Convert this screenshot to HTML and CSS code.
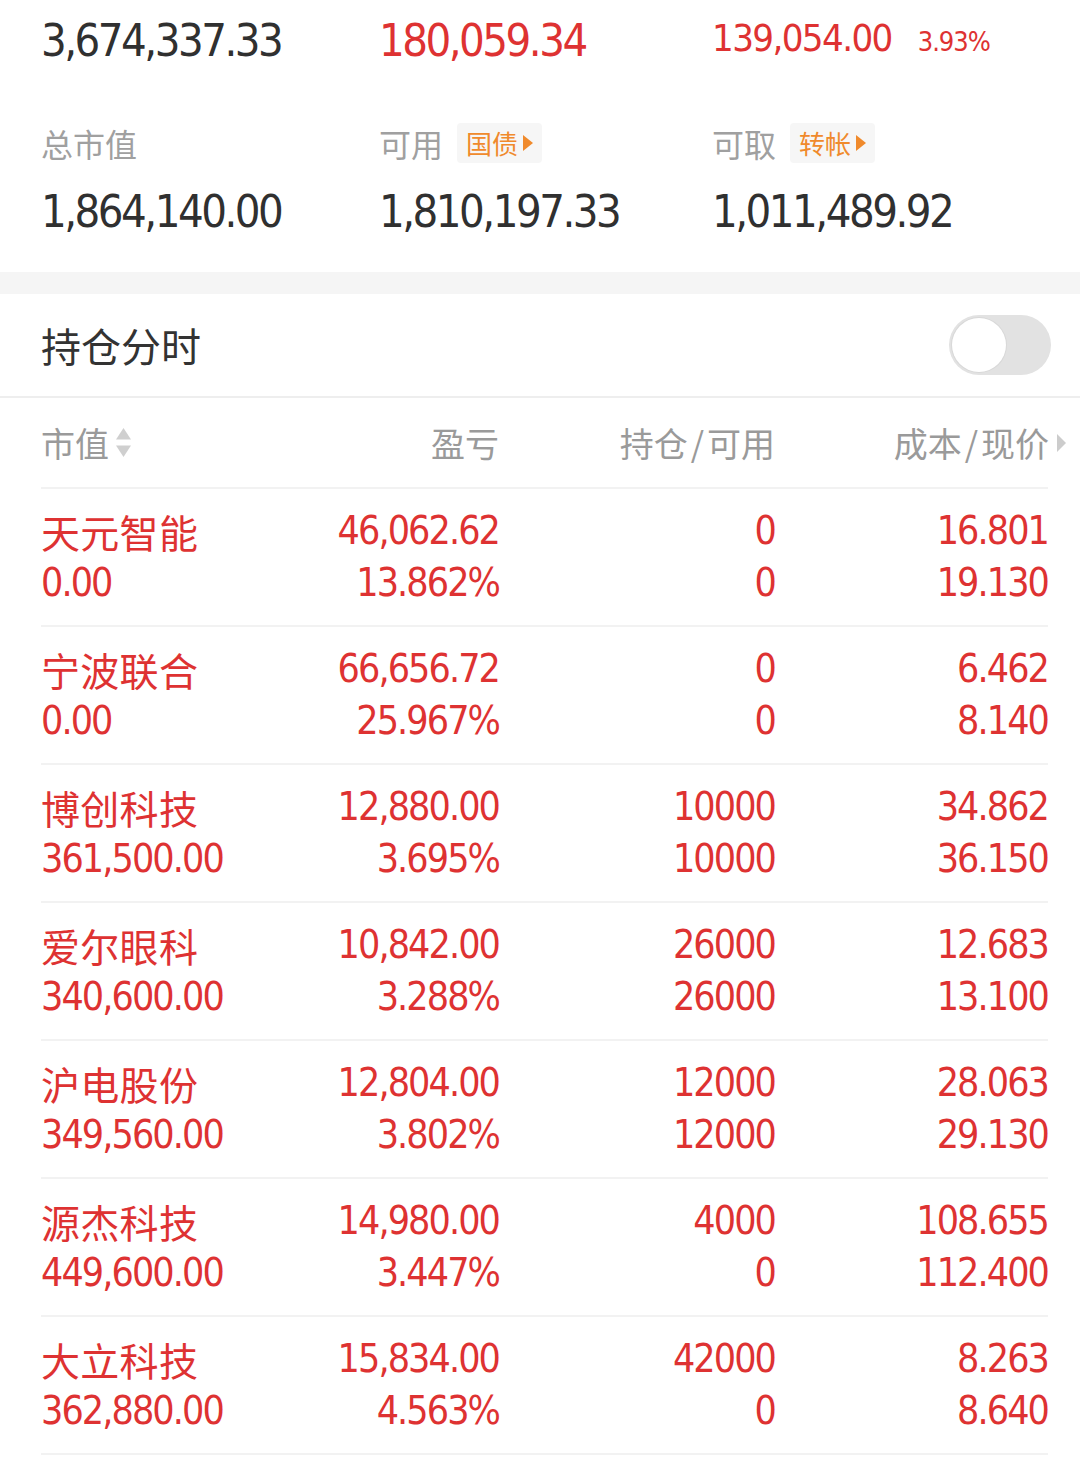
FILE: index.html
```html
<!DOCTYPE html>
<html lang="zh-CN">
<head>
<meta charset="utf-8">
<title>持仓</title>
<link rel="stylesheet" href="styles.css">
</head>
<body>
<section class="summary">
  <div class="sum-row top">
    <div class="cell"><span class="num big dark">3,674,337.33</span></div>
    <div class="cell"><span class="num big red">180,059.34</span></div>
    <div class="cell cell-3"><span class="num mid red">139,054.00</span><span class="num pct red">3.93%</span></div>
  </div>
  <div class="sum-row labels">
    <div class="cell"><span class="label">总市值</span></div>
    <div class="cell"><span class="label">可用</span><span class="badge">国债<i class="tri"></i></span></div>
    <div class="cell"><span class="label">可取</span><span class="badge">转帐<i class="tri"></i></span></div>
  </div>
  <div class="sum-row values">
    <div class="cell"><span class="num big dark">1,864,140.00</span></div>
    <div class="cell"><span class="num big dark">1,810,197.33</span></div>
    <div class="cell"><span class="num big dark">1,011,489.92</span></div>
  </div>
</section>

<div class="gap"></div>

<section class="title-bar">
  <h2 class="title">持仓分时</h2>
  <div class="toggle"><span class="knob"></span></div>
</section>

<section class="table">
  <div class="thead">
    <div class="th th-left">市值<svg class="sort" viewBox="0 0 17 31" width="17" height="31"><path d="M8.5 1 L16 12.5 L1 12.5 Z" fill="#cfcfcf"/><path d="M1 18.5 L16 18.5 L8.5 30 Z" fill="#cfcfcf"/></svg></div>
    <div class="th">盈亏</div>
    <div class="th">持仓<span class="slash">/</span>可用</div>
    <div class="th">成本<span class="slash">/</span>现价<i class="more"></i></div>
  </div>

  <div class="tr">
    <div class="td left"><div class="name">天元智能</div><div class="num v">0.00</div></div>
    <div class="td"><div class="num v">46,062.62</div><div class="num v">13.862%</div></div>
    <div class="td"><div class="num v">0</div><div class="num v">0</div></div>
    <div class="td"><div class="num v">16.801</div><div class="num v">19.130</div></div>
  </div>
  <div class="tr">
    <div class="td left"><div class="name">宁波联合</div><div class="num v">0.00</div></div>
    <div class="td"><div class="num v">66,656.72</div><div class="num v">25.967%</div></div>
    <div class="td"><div class="num v">0</div><div class="num v">0</div></div>
    <div class="td"><div class="num v">6.462</div><div class="num v">8.140</div></div>
  </div>
  <div class="tr">
    <div class="td left"><div class="name">博创科技</div><div class="num v">361,500.00</div></div>
    <div class="td"><div class="num v">12,880.00</div><div class="num v">3.695%</div></div>
    <div class="td"><div class="num v">10000</div><div class="num v">10000</div></div>
    <div class="td"><div class="num v">34.862</div><div class="num v">36.150</div></div>
  </div>
  <div class="tr">
    <div class="td left"><div class="name">爱尔眼科</div><div class="num v">340,600.00</div></div>
    <div class="td"><div class="num v">10,842.00</div><div class="num v">3.288%</div></div>
    <div class="td"><div class="num v">26000</div><div class="num v">26000</div></div>
    <div class="td"><div class="num v">12.683</div><div class="num v">13.100</div></div>
  </div>
  <div class="tr">
    <div class="td left"><div class="name">沪电股份</div><div class="num v">349,560.00</div></div>
    <div class="td"><div class="num v">12,804.00</div><div class="num v">3.802%</div></div>
    <div class="td"><div class="num v">12000</div><div class="num v">12000</div></div>
    <div class="td"><div class="num v">28.063</div><div class="num v">29.130</div></div>
  </div>
  <div class="tr">
    <div class="td left"><div class="name">源杰科技</div><div class="num v">449,600.00</div></div>
    <div class="td"><div class="num v">14,980.00</div><div class="num v">3.447%</div></div>
    <div class="td"><div class="num v">4000</div><div class="num v">0</div></div>
    <div class="td"><div class="num v">108.655</div><div class="num v">112.400</div></div>
  </div>
  <div class="tr">
    <div class="td left"><div class="name">大立科技</div><div class="num v">362,880.00</div></div>
    <div class="td"><div class="num v">15,834.00</div><div class="num v">4.563%</div></div>
    <div class="td"><div class="num v">42000</div><div class="num v">0</div></div>
    <div class="td"><div class="num v">8.263</div><div class="num v">8.640</div></div>
  </div>
  <div class="tr-end"></div>
</section>
</body>
</html>
```

FILE: styles.css
```css
* { box-sizing: border-box; }

html, body {
  margin: 0;
  padding: 0;
  background: #ffffff;
}

body {
  width: 1080px;
  font-family: "Noto Sans CJK SC", "Noto Sans", sans-serif;
  color: #333333;
  overflow: hidden;
}

.num {
  font-family: "DejaVu Sans Condensed", "Liberation Sans", sans-serif;
}

.red { color: #de3232; }
.dark { color: #303030; }

/* ---------- summary ---------- */
.summary {
  padding: 13px 0 32px 41px;
}

.sum-row {
  display: grid;
  grid-template-columns: 338px 333px 1fr;
}

.sum-row .cell {
  display: flex;
  align-items: baseline;
}

.big {
  font-size: 45px;
  line-height: 56px;
  letter-spacing: -2.5px;
}

.cell-3 {
  margin-top: -3px;
}

.mid {
  font-size: 38px;
  line-height: 56px;
  letter-spacing: -1.6px;
}

.pct {
  font-size: 27px;
  letter-spacing: -1px;
  margin-left: 26px;
}

.labels {
  margin-top: 52px;
  height: 44px;
}

.labels .cell {
  align-items: center;
}

.label {
  font-size: 32px;
  line-height: 44px;
  color: #a0a0a0;
}

.badge {
  display: inline-flex;
  align-items: center;
  height: 40px;
  margin-left: 14px;
  padding: 0 9px 0 9px;
  background: #f6f6f6;
  border-radius: 4px;
  color: #f08a2c;
  font-size: 26px;
  line-height: 40px;
}

.badge .tri {
  display: inline-block;
  width: 0;
  height: 0;
  margin-left: 5px;
  border-left: 10px solid #f08a2c;
  border-top: 8px solid transparent;
  border-bottom: 8px solid transparent;
}

.values {
  margin-top: 19px;
}

.gap {
  height: 22px;
  background: #f5f5f5;
}

/* ---------- title bar ---------- */
.title-bar {
  display: flex;
  align-items: center;
  justify-content: space-between;
  height: 104px;
  padding: 0 29px 0 41px;
  border-bottom: 2px solid #eeeeee;
}

.title {
  margin: 0;
  font-size: 40px;
  font-weight: normal;
  color: #333333;
  line-height: 56px;
}

.toggle {
  width: 102px;
  height: 60px;
  border-radius: 30px;
  background: #e2e2e2;
  padding: 3px;
  display: flex;
  align-items: center;
}

.knob {
  width: 54px;
  height: 54px;
  border-radius: 50%;
  background: #ffffff;
  box-shadow: 0 0 0 1px #d8d8d8;
}

/* ---------- table ---------- */
.table {
  padding: 0 32px 0 41px;
}

.thead,
.tr {
  display: grid;
  grid-template-columns: 230px 228px 276px 273px;
}

.thead {
  height: 89px;
  align-items: center;
}

.th {
  display: flex;
  align-items: center;
  justify-content: flex-end;
  font-size: 34px;
  line-height: 44px;
  color: #9a9a9a;
}

.th-left {
  justify-content: flex-start;
}

.sort {
  margin-left: 6px;
}

.slash {
  margin: 0 3px;
}

.more {
  display: inline-block;
  width: 0;
  height: 0;
  margin-left: 8px;
  margin-right: -18px;
  border-left: 9px solid #cccccc;
  border-top: 9px solid transparent;
  border-bottom: 9px solid transparent;
}

.tr {
  border-top: 2px solid #f2f2f2;
  padding: 16px 0;
  color: #de3232;
}

.tr-end {
  border-top: 2px solid #f2f2f2;
  height: 10px;
}

.td {
  display: flex;
  flex-direction: column;
  align-items: flex-end;
}

.td.left {
  align-items: flex-start;
}

.name {
  font-size: 39px;
  line-height: 52px;
  letter-spacing: 0.3px;
}

.v {
  font-size: 39px;
  line-height: 52px;
  letter-spacing: -1.9px;
}
```
